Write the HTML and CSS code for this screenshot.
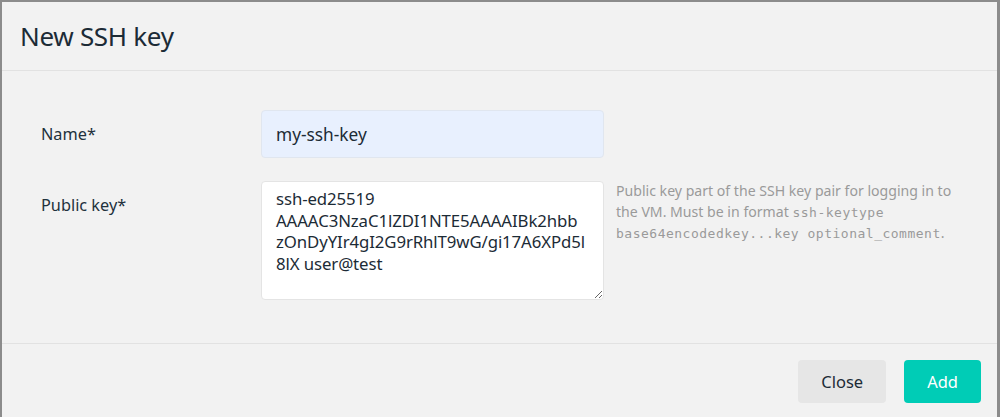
FILE: index.html
```html
<!DOCTYPE html>
<html>
<head>
    <title>New SSH key</title>
    <link rel="stylesheet" href="styles.css">
</head>
<body>
    <div class="modal">
        <div class="modal-header">
            <div class="modal-title">New SSH key</div>
        </div>

        <form class="modal-body">
            <div class="field">
                <label class="field-label" for="key_name">Name*</label>
                <input class="field-input autofilled" type="text" id="key_name" name="key_name" value="my-ssh-key">
            </div>
            <div class="field">
                <label class="field-label" for="public_key">Public key*</label>
                <textarea class="field-input field-textarea" id="public_key" name="public_key">ssh-ed25519
AAAAC3NzaC1lZDI1NTE5AAAAIBk2hbb
zOnDyYIr4gI2G9rRhlT9wG/gi17A6XPd5l
8lX user@test</textarea>
                <div class="field-help">
                    <span>Public key part of the SSH key pair for logging in to</span><br>
                    <span>the VM. Must be in format</span> <code>ssh-keytype</code><br>
                    <code>base64encodedkey...key optional_comment</code><span>.</span>
                </div>
            </div>
        </form>

        <div class="modal-footer">
            <button type="button" class="btn btn-close">Close</button>
            <button type="button" class="btn btn-add">Add</button>
        </div>
    </div>
</body>
</html>
```

FILE: styles.css
```css
body {
    margin: 0;
    height: 100vh;
    overflow: hidden;
    background-color: #8c8c8c; /* backdrop behind the dialog */
    font-family: "Noto Sans", "Open Sans", sans-serif;
    color: #1c2b36;
}

.modal {
    margin: 2px 3px 0 2px;
    height: calc(100vh - 2px);
    background-color: #f2f2f2;
}

.modal-header {
    height: 68px;
    padding: 0 18px;
    display: flex;
    align-items: center;
    border-bottom: 1px solid #e2e2e2;
}

.modal-title {
    font-size: 26px;
    letter-spacing: -0.3px;
}

.modal-body {
    padding: 39px 39px 43px;
    display: flex;
    flex-direction: column;
    gap: 23px;
    margin: 0;
    border-bottom: 1px solid #e2e2e2;
}

.field {
    display: flex;
    align-items: flex-start;
}

.field-label {
    flex-shrink: 0;
    width: 220px;
    line-height: 48px;
    font-size: 16.3px;
    color: #22313c;
}

.field-input {
    flex-shrink: 0;
    box-sizing: border-box;
    width: 343px;
    height: 48px;
    padding: 0 14px;
    border: 1px solid #e4e4e4;
    border-radius: 4px;
    background-color: #fff;
    font-family: inherit;
    font-size: 17.3px;
    color: #1c2b36;
    outline: none;
}

/* browser autofill tint */
.autofilled {
    background-color: #e8f0fe;
    border-color: #e0e6ef;
}

.field-textarea {
    height: 119px;
    padding: 6px 2px 6px 14px;
    line-height: 21.7px;
    font-size: 16.8px;
    letter-spacing: -0.1px;
    white-space: pre;
    overflow: hidden;
    resize: vertical;
}

.field-help {
    flex-shrink: 0;
    width: 350px;
    margin-left: 12px;
    margin-top: -1px;
    font-size: 14.1px;
    line-height: 21px;
    color: #9a9a9a;
    white-space: nowrap;
}

.field-help code {
    font-family: "DejaVu Sans Mono", "Liberation Mono", monospace;
    font-size: 13px;
    letter-spacing: 0.5px;
    line-height: 1;
}

.modal-footer {
    padding: 16px;
    display: flex;
    justify-content: flex-end;
    gap: 18px;
}

.btn {
    height: 43px;
    padding: 0 23px;
    border: none;
    border-radius: 4px;
    font-family: inherit;
    font-size: 16.5px;
    cursor: pointer;
}

.btn-close {
    background-color: #e6e6e6;
    color: #1c2b36;
}

.btn-add {
    background-color: #00ccb6;
    color: #fff;
}
```
